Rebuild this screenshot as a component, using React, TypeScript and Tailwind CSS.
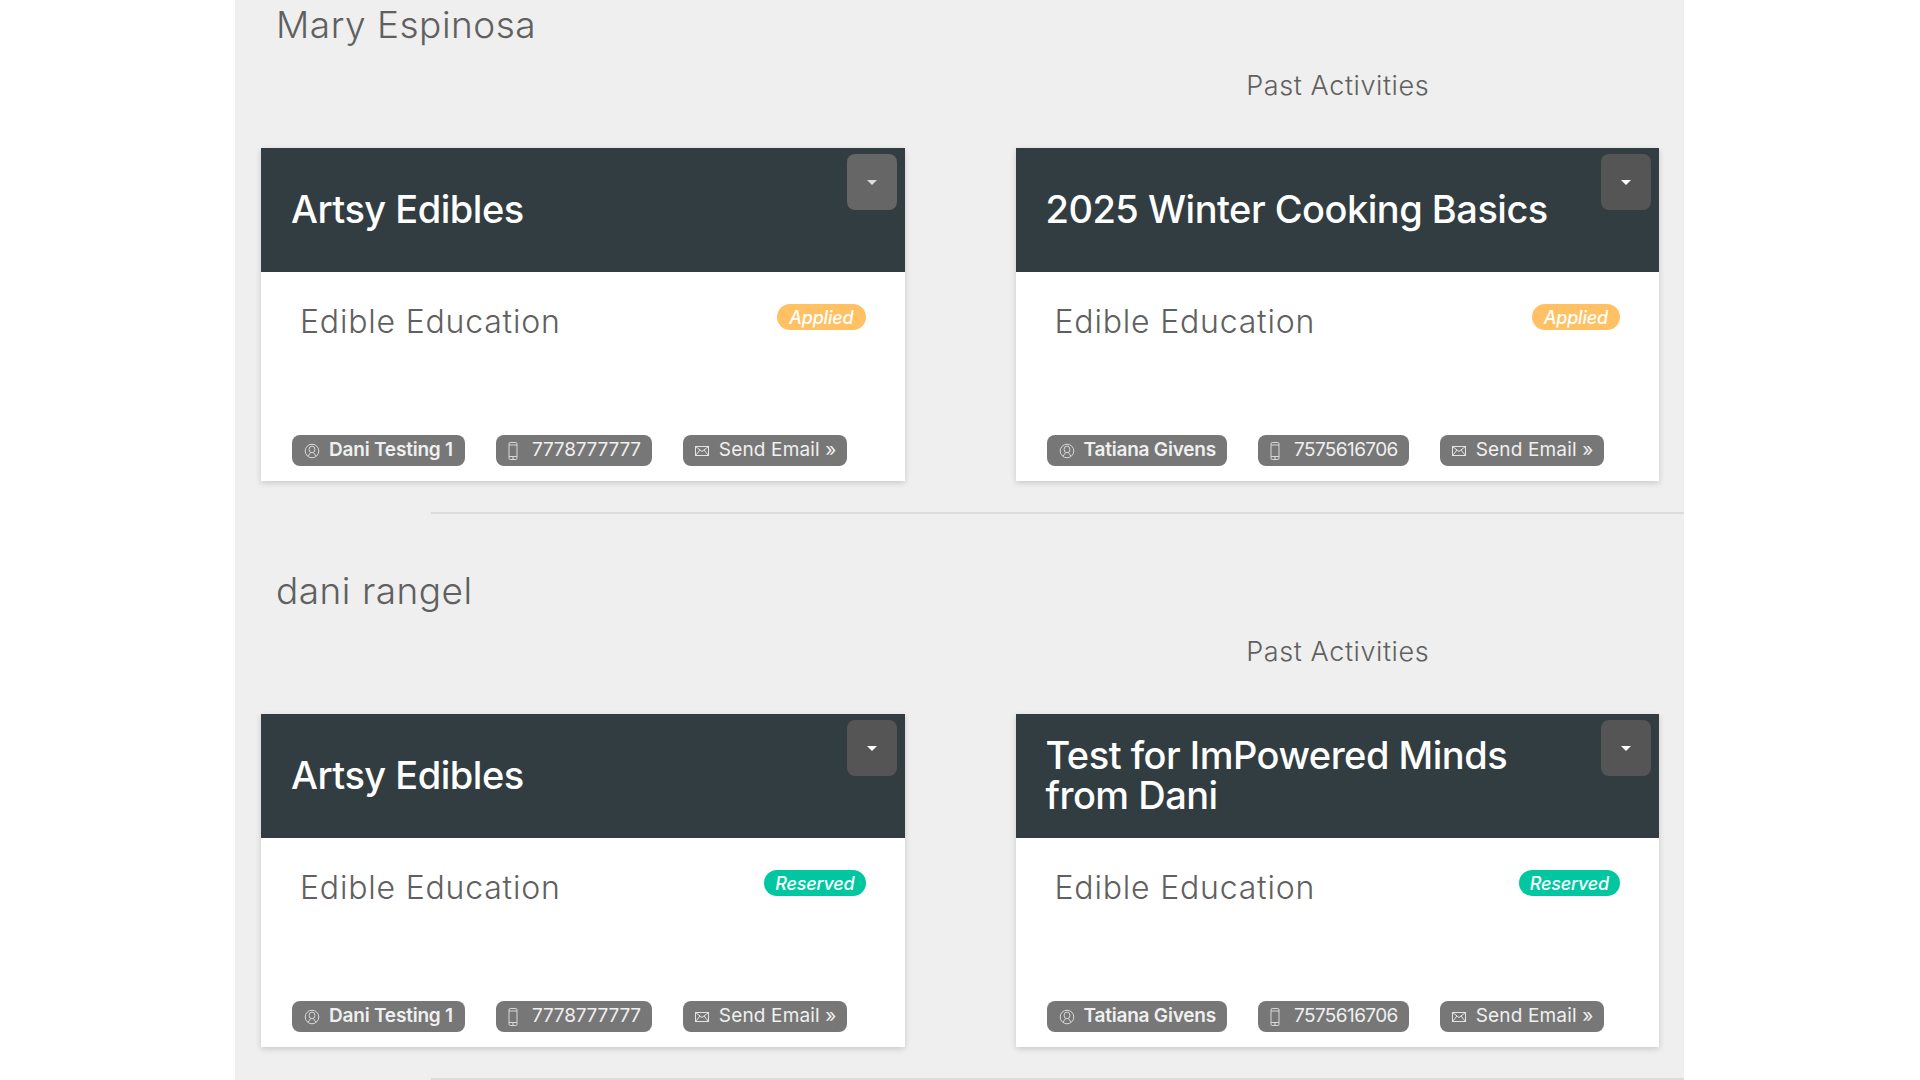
interface IActivity {
  title: string;
  status: "Applied" | "Reserved";
  contact: string;
  phone: string;
  lightMenu?: boolean;
}

interface IPerson {
  name: string;
  activities: IActivity[];
}

const people: IPerson[] = [
  {
    name: "Mary Espinosa",
    activities: [
      { title: "Artsy Edibles", status: "Applied", contact: "Dani Testing 1", phone: "7778777777", lightMenu: true },
      { title: "2025 Winter Cooking Basics", status: "Applied", contact: "Tatiana Givens", phone: "7575616706" },
    ],
  },
  {
    name: "dani rangel",
    activities: [
      { title: "Artsy Edibles", status: "Reserved", contact: "Dani Testing 1", phone: "7778777777" },
      { title: "Test for ImPowered Minds from Dani", status: "Reserved", contact: "Tatiana Givens", phone: "7575616706" },
    ],
  },
];

function UserIcon() {
  return (
    <svg viewBox="0 0 16 16" className="size-[16px] shrink-0 text-[#d8d8d8]" fill="none" stroke="currentColor" strokeWidth="1">
      <circle cx="8" cy="8" r="6.8" />
      <ellipse cx="8" cy="6.4" rx="2.9" ry="3.4" />
      <path d="M4.2 13 L6.6 9.5 M11.8 13 L9.4 9.5" />
    </svg>
  );
}

function PhoneIcon() {
  return (
    <svg viewBox="0 0 10 18" className="h-[18px] w-[10px] shrink-0 text-[#d8d8d8]" fill="none" stroke="currentColor" strokeWidth="1">
      <rect x="1" y="0.5" width="8" height="17" rx="1.2" />
      <path d="M1 3 H9 M1 14.5 H9" />
      <circle cx="5" cy="16" r="0.5" />
    </svg>
  );
}

function MailIcon() {
  return (
    <svg viewBox="0 0 14 10" className="h-[10px] w-[14px] shrink-0 text-[#e4e4e4]" fill="none" stroke="currentColor" strokeWidth="1">
      <rect x="0.5" y="0.5" width="13" height="9" />
      <path d="M0.5 0.5 L7 5.5 L13.5 0.5 M0.5 9.5 L5 4 M13.5 9.5 L9 4" />
    </svg>
  );
}

function Pill({ children }: { children: React.ReactNode }) {
  return (
    <div className="flex h-[31px] items-center rounded-[8px] bg-[#777777] pr-[11px] pl-[12px] text-[19px] tracking-[-0.2px] text-[#f0f0f0]">
      {children}
    </div>
  );
}

function ActivityCard({ activity }: { activity: IActivity }) {
  const applied = activity.status === "Applied";
  return (
    <div className="flex h-[333px] w-[643.5px] flex-col bg-white shadow-[0_2px_6px_rgba(0,0,0,0.16)]">
      <div className="relative flex h-[124px] items-center bg-[#323d41] pr-[90px] pl-[30px]">
        <h3 className="mt-[-2px] text-[38px] leading-[40px] font-medium tracking-[-0.5px] text-white">{activity.title}</h3>
        <button
          className={`absolute top-[6px] right-[8px] flex h-[56px] w-[50px] items-center justify-center rounded-[8px] ${
            activity.lightMenu ? "bg-[#666666]" : "bg-[#555555]"
          }`}
        >
          <span
            className={`border-x-[5px] border-t-[5px] border-x-transparent ${
              activity.lightMenu ? "border-t-[#dddddd]" : "border-t-white"
            }`}
          />
        </button>
      </div>
      <div className="flex flex-1 flex-col pr-[30px] pb-[15px] pl-[31px]">
        <div className="flex items-start justify-between pt-[30px] pr-[9px] pl-[8px]">
          <p className="text-[32px] leading-[40px] font-light tracking-[0.8px] text-[#606060]">Edible Education</p>
          <span
            className={`mt-[2px] flex h-[26px] items-center rounded-full text-[18px] font-medium tracking-[-0.2px] text-white italic ${
              applied ? "bg-[#ffc163] px-[12px]" : "bg-[#00c7a0] px-[11px]"
            }`}
          >
            {activity.status}
          </span>
        </div>
        <div className="mt-auto flex gap-[31px]">
          <div className="min-w-[173px]">
            <Pill>
              <UserIcon />
              <span className="ml-[9px] font-semibold">{activity.contact}</span>
            </Pill>
          </div>
          <Pill>
            <PhoneIcon />
            <span className={`ml-[14px] ${activity.phone === "7575616706" ? "tracking-[-0.6px]" : ""}`}>{activity.phone}</span>
          </Pill>
          <Pill>
            <MailIcon />
            <span className="ml-[10px] tracking-[0.15px]">Send Email »</span>
          </Pill>
        </div>
      </div>
    </div>
  );
}

export default function App() {
  return (
    <div className="h-[1080px] w-[1920px] overflow-hidden bg-white font-['Inter',sans-serif]">
      <div className="ml-[235px] h-full w-[1449px] bg-[#efefef]">
        {people.map((person) => (
          <section key={person.name} className="flex h-[566px] flex-col">
            <h2 className="h-[52px] pt-[2px] pl-[41px] text-[37px] leading-[46px] font-light tracking-[0.5px] text-[#606060]">
              {person.name}
            </h2>
            <div className="flex h-[96px] pl-[26px]">
              <div className="w-[755px]" />
              <p className="w-[643.5px] pt-[17px] text-center text-[27px] leading-[34px] font-light tracking-[0.6px] text-[#606060]">
                Past Activities
              </p>
            </div>
            <div className="flex gap-[111px] pl-[26px]">
              {person.activities.map((activity) => (
                <ActivityCard key={activity.title} activity={activity} />
              ))}
            </div>
            <div className="mt-[31px] ml-[196px] h-[2px] bg-[#dcdcdc]" />
          </section>
        ))}
      </div>
    </div>
  );
}
